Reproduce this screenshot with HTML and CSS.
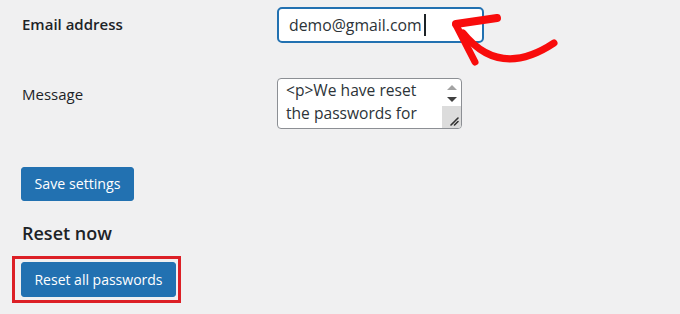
FILE: index.html
```html
<!DOCTYPE html>
<html lang="en">
<head>
<meta charset="utf-8">
<title>Reset passwords settings</title>
<link rel="stylesheet" href="styles.css">
</head>
<body>
<div class="page">
  <div class="form-table">
    <div class="row row-email">
      <div class="label">Email address</div>
      <div class="field">
        <div class="input">demo@gmail.com<span class="caret"></span></div>
      </div>
    </div>
    <div class="row row-msg">
      <div class="label">Message</div>
      <div class="field">
        <div class="textarea">
          <div class="ta-text">&lt;p&gt;We have reset the passwords for</div>
          <div class="ta-scroll">
            <div class="ta-arrows">
              <span class="arr arr-up"></span>
              <span class="arr arr-down"></span>
            </div>
            <div class="ta-corner">
              <svg class="grip" width="10" height="10" viewBox="0 0 10 10"><path d="M9 2 L2 9 M9 5.5 L5.5 9" stroke="#333" stroke-width="1.6" stroke-linecap="round"/></svg>
            </div>
          </div>
        </div>
      </div>
    </div>
  </div>
  <button class="btn btn-save">Save settings</button>
  <h2 class="heading">Reset now</h2>
  <div class="highlight"><button class="btn btn-reset">Reset all passwords</button></div>

  <svg class="annot-arrow" width="680" height="80" viewBox="0 0 680 80">
    <g fill="none" stroke="#f80c0c" stroke-linecap="round" stroke-linejoin="round">
      <path d="M463 33 Q 500 79 554 43" stroke-width="7"/>
      <path d="M497 18 L 456 24" stroke-width="8"/>
      <path d="M456 25 L 475 62" stroke-width="7"/>
    </g>
  </svg>
</div>
</body>
</html>
```
FILE: styles.css
```css
html, body {
  margin: 0;
  padding: 0;
  background: #f0f0f1;
}
body {
  font-family: "Open Sans", "Noto Sans", sans-serif;
  color: #1d2327;
  width: 680px;
  height: 314px;
  overflow: hidden;
}
.page {
  position: relative;
  padding: 7px 0 0 21px;
}
.form-table {
  display: flex;
  flex-direction: column;
  gap: 35px;
}
.row {
  display: grid;
  grid-template-columns: 256px auto;
  align-items: start;
}
.label {
  font-size: 15px;
  font-weight: 600;
  line-height: 20px;
  padding-left: 1px;
}
.row-email .label { padding-top: 7px; }
.row-msg .label { padding-top: 6px; font-weight: 500; }

.input {
  box-sizing: border-box;
  width: 207px;
  height: 36px;
  border: 2px solid #2271b1;
  border-radius: 5px;
  background: #fff;
  font-size: 15.8px;
  line-height: 32px;
  padding-left: 10px;
  color: #2c3338;
  display: flex;
  align-items: center;
}
.caret {
  display: inline-block;
  width: 2px;
  height: 22px;
  background: #1d2327;
  margin-left: 2px;
}
.textarea {
  box-sizing: border-box;
  width: 185px;
  height: 51px;
  border: 1px solid #8c8f94;
  border-radius: 4px;
  background: #fff;
  display: flex;
  overflow: hidden;
}
.ta-text {
  flex: 1;
  font-size: 15.6px;
  line-height: 23px;
  padding: 0 0 0 8px;
  color: #2c3338;
}
.ta-scroll {
  width: 19px;
  display: flex;
  flex-direction: column;
}
.ta-arrows {
  flex: 1;
  display: flex;
  flex-direction: column;
  align-items: center;
  justify-content: center;
  gap: 7px;
  padding-top: 2px;
}
.arr {
  width: 0;
  height: 0;
  border-left: 5px solid transparent;
  border-right: 5px solid transparent;
}
.arr-up { border-bottom: 5px solid #a3a3a3; }
.arr-down { border-top: 5px solid #404040; }
.ta-corner {
  height: 20px;
  background: #dcdcdc;
  display: flex;
  align-items: flex-end;
  justify-content: flex-end;
  padding: 0 2px 2px 0;
}
.grip { display: block; }

.btn {
  font-family: "Open Sans", "Noto Sans", sans-serif;
  font-size: 14.2px;
  color: #fff;
  background: #2271b1;
  border: 1px solid #2271b1;
  border-radius: 3px;
  line-height: 20px;
  padding: 6px 8px;
  cursor: pointer;
  display: block;
  white-space: nowrap;
  text-align: center;
}
.btn-save {
  margin-top: 38px;
  width: 113px;
  height: 34px;
}
.heading {
  margin: 20px 0 0 1px;
  font-size: 18px;
  font-weight: 600;
  line-height: 24px;
}
.highlight {
  margin: 11px 0 0 -9px;
  display: inline-block;
  border: 3px solid #dc1f26;
  padding: 3px 2px 3px 6px;
}
.btn-reset {
  width: 155px;
  height: 35px;
  font-size: 14px;
}
.annot-arrow {
  position: absolute;
  left: 0;
  top: 0;
  pointer-events: none;
}
```
